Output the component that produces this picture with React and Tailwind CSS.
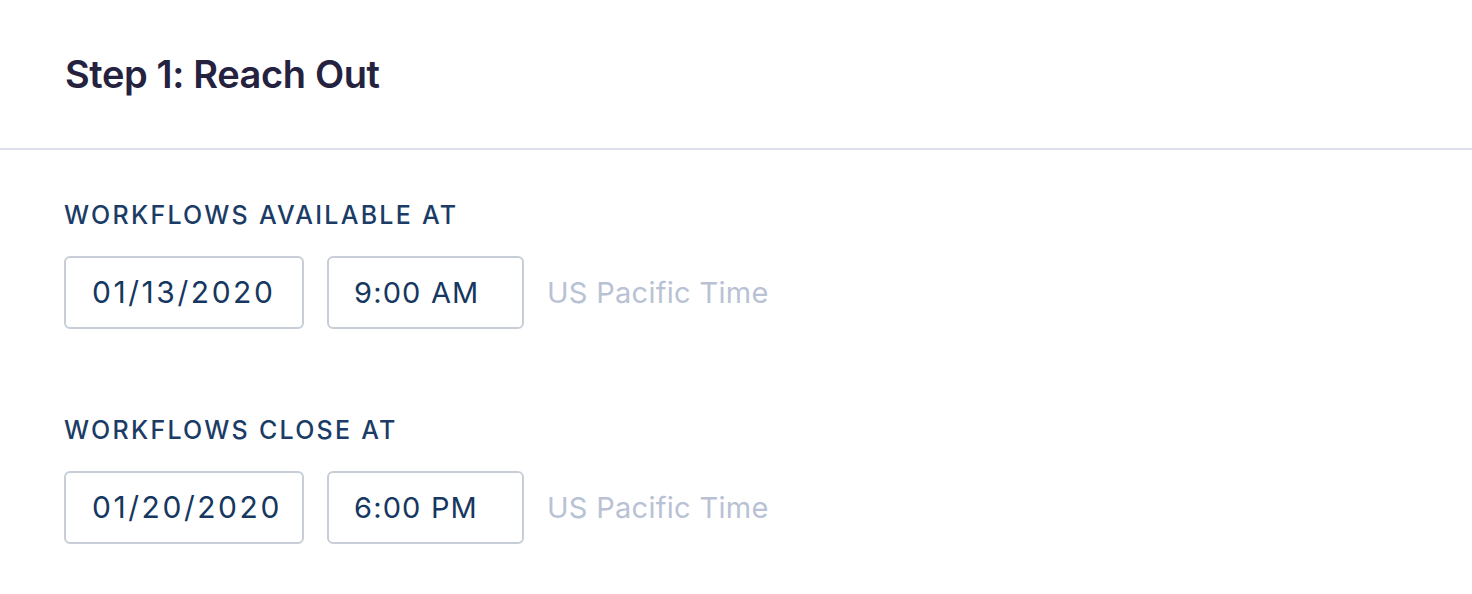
import React from "react";

const Field = ({ label, date, time }) => (
  <div>
    <div className="text-[25px] leading-[32px] font-medium tracking-[0.09em] text-[#1b3c66] mb-[25px]">
      {label}
    </div>
    <div className="flex items-center gap-[23px]">
      <div className="w-[240px] h-[73px] border-2 border-[#c7ced8] rounded-[6px] flex items-center pl-[26px]">
        <div className="w-[186px] overflow-hidden whitespace-nowrap text-[30px] tracking-[0.085em] text-[#153760]">
          {date}
        </div>
      </div>
      <div className="w-[197px] h-[73px] border-2 border-[#c7ced8] rounded-[6px] flex items-center pl-[25px]">
        <span className="text-[29px] tracking-[0.04em] text-[#153760] whitespace-nowrap">{time}</span>
      </div>
      <span className="text-[29px] tracking-[0.01em] text-[#b9c2d4]">US Pacific Time</span>
    </div>
  </div>
);

export default function App() {
  return (
    <div className="w-[1472px] h-[594px] bg-white font-['Inter',sans-serif]">
      <div className="h-[150px] border-b-2 border-[#dde0eb] flex items-center px-[65px]">
        <h1 className="text-[38px] font-semibold tracking-[-0.01em] text-[#25223f]">Step 1: Reach Out</h1>
      </div>
      <div className="px-[64px] pt-[49px] flex flex-col gap-[85px]">
        <Field label="WORKFLOWS AVAILABLE AT" date="01/13/2020" time="9:00 AM" />
        <Field label="WORKFLOWS CLOSE AT" date="01/20/2020" time="6:00 PM" />
      </div>
    </div>
  );
}
